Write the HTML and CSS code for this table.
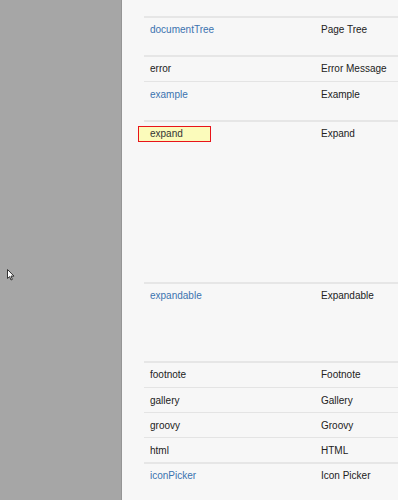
FILE: index.html
```html
<!DOCTYPE html>
<html>
<head>
    <link rel="stylesheet" href="styles.css">
</head>
<body>
    <div class="side">
        <svg class="cursor" width="8" height="12" viewBox="0 0 8 12">
            <path d="M0.5 0.5 L0.5 9.5 L2.6 7.6 L4 11 L5.4 10.4 L4 7.1 L7 7.1 Z" fill="#fff" stroke="#333" stroke-width="1"/>
        </svg>
    </div>
    <div class="main">
        <div class="macros">
            <div class="row thick h39"><span class="name link">documentTree</span><span class="title">Page Tree</span></div>
            <div class="row thick h26"><span class="name">error</span><span class="title">Error Message</span></div>
            <div class="row h39"><span class="name link">example</span><span class="title">Example</span></div>
            <div class="row thick h162"><span class="name"><span class="hit">expand</span></span><span class="title">Expand</span></div>
            <div class="row thick h79"><span class="name link">expandable</span><span class="title">Expandable</span></div>
            <div class="row thick h26"><span class="name">footnote</span><span class="title">Footnote</span></div>
            <div class="row"><span class="name">gallery</span><span class="title">Gallery</span></div>
            <div class="row"><span class="name">groovy</span><span class="title">Groovy</span></div>
            <div class="row"><span class="name">html</span><span class="title">HTML</span></div>
            <div class="row thick"><span class="name link">iconPicker</span><span class="title">Icon Picker</span></div>
        </div>
    </div>
</body>
</html>
```
FILE: styles.css
```css
html, body {
    height: 100%;
}
body {
    margin: 0;
    display: flex;
    background-color: #f7f7f7;
    font-family: 'Liberation Sans', Arial, sans-serif;
    font-size: 10px;
    color: #222;
    overflow: hidden;
}
.side {
    position: relative;
    width: 121px;
    flex: none;
    background-color: #a6a6a6;
    border-right: 1px solid #959595;
}
.cursor {
    position: absolute;
    left: 7px;
    top: 269px;
}
.main {
    flex: 1;
    padding: 16px 0 0 22px;
}
.row {
    display: flex;
    box-sizing: border-box;
    height: 25px;
    padding-top: 7px;
    border-top: 1px solid #e4e4e4;
    line-height: 12px;
}
.row.thick {
    border-top: 2px solid #e6e6e6;
    padding-top: 6px;
}
.h26 { height: 26px; }
.h39 { height: 39px; }
.h79 { height: 79px; }
.h162 { height: 162px; }
.name {
    width: 177px;
    padding-left: 6px;
    box-sizing: border-box;
}
.link {
    color: #3b73af;
}
.hit {
    display: inline-block;
    margin: -3px 0 0 -12px;
    padding: 1px 0 1px 11px;
    width: 60px;
    background-color: #fbfbbb;
    border: 1px solid #e8141a;
    color: #333;
}
.title {
    color: #222;
}
```
